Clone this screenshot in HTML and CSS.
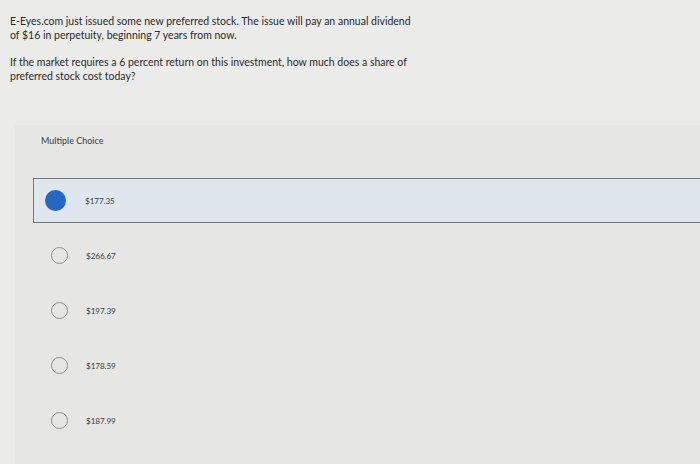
FILE: index.html
```html
<!DOCTYPE html>
<html>
<head>
<meta charset="utf-8">
<link rel="stylesheet" href="styles.css">
</head>
<body>
<div class="page">
  <div class="question">
    <p class="para">E-Eyes.com just issued some new preferred stock. The issue will pay an annual dividend<br>of $16 in perpetuity, beginning 7 years from now.</p>
    <p class="para">If the market requires a 6 percent return on this investment, how much does a share of<br>preferred stock cost today?</p>
  </div>
  <div class="panel">
    <div class="label">Multiple Choice</div>
    <div class="options">
      <div class="option selected"><span class="radio filled"></span><span class="val">$177.35</span></div>
      <div class="option"><span class="radio"></span><span class="val">$266.67</span></div>
      <div class="option"><span class="radio"></span><span class="val">$197.39</span></div>
      <div class="option"><span class="radio"></span><span class="val">$178.59</span></div>
      <div class="option"><span class="radio"></span><span class="val">$187.99</span></div>
    </div>
  </div>
</div>
</body>
</html>
```
FILE: styles.css
```css
html, body {
  margin: 0;
  padding: 0;
  background: #ebecea;
}
body {
  font-family: Lato, "Open Sans", sans-serif;
  color: #2e2e2e;
  width: 700px;
  height: 464px;
  overflow: hidden;
}
.page {
  padding-top: 14px;
}
.question {
  padding-left: 10px;
}
.para {
  margin: 0 0 13px 0;
  font-size: 10.5px;
  line-height: 14px;
  color: #2a2a2a;
}
.panel {
  margin-left: 15px;
  margin-top: 42px;
  background: #e6e7e5;
  height: 339px;
  padding-top: 10px;
  box-sizing: border-box;
}
.label {
  font-size: 9px;
  color: #3a3a3a;
  padding-left: 26px;
  line-height: 12px;
}
.options {
  margin-top: 31px;
  display: flex;
  flex-direction: column;
  gap: 10px;
}
.option {
  display: flex;
  align-items: center;
  height: 45px;
  margin-left: 18px;
  padding-left: 18px;
  font-size: 8.2px;
  color: #3c3c3c;
  letter-spacing: -0.1px;
}
.option.selected {
  background: #dfe6ee;
  border: 1.5px solid #6f7882;
  border-right: none;
  height: 43px;
  padding-left: 11px;
}
.radio {
  width: 17px;
  height: 17px;
  border: 1.5px solid #8a8c8e;
  border-radius: 50%;
  box-sizing: border-box;
  flex: none;
}
.radio.filled {
  width: 21px;
  height: 21px;
  background: #2567c4;
  border: none;
}
.val {
  margin-left: 18px;
}
.selected .val {
  margin-left: 19px;
}
```
